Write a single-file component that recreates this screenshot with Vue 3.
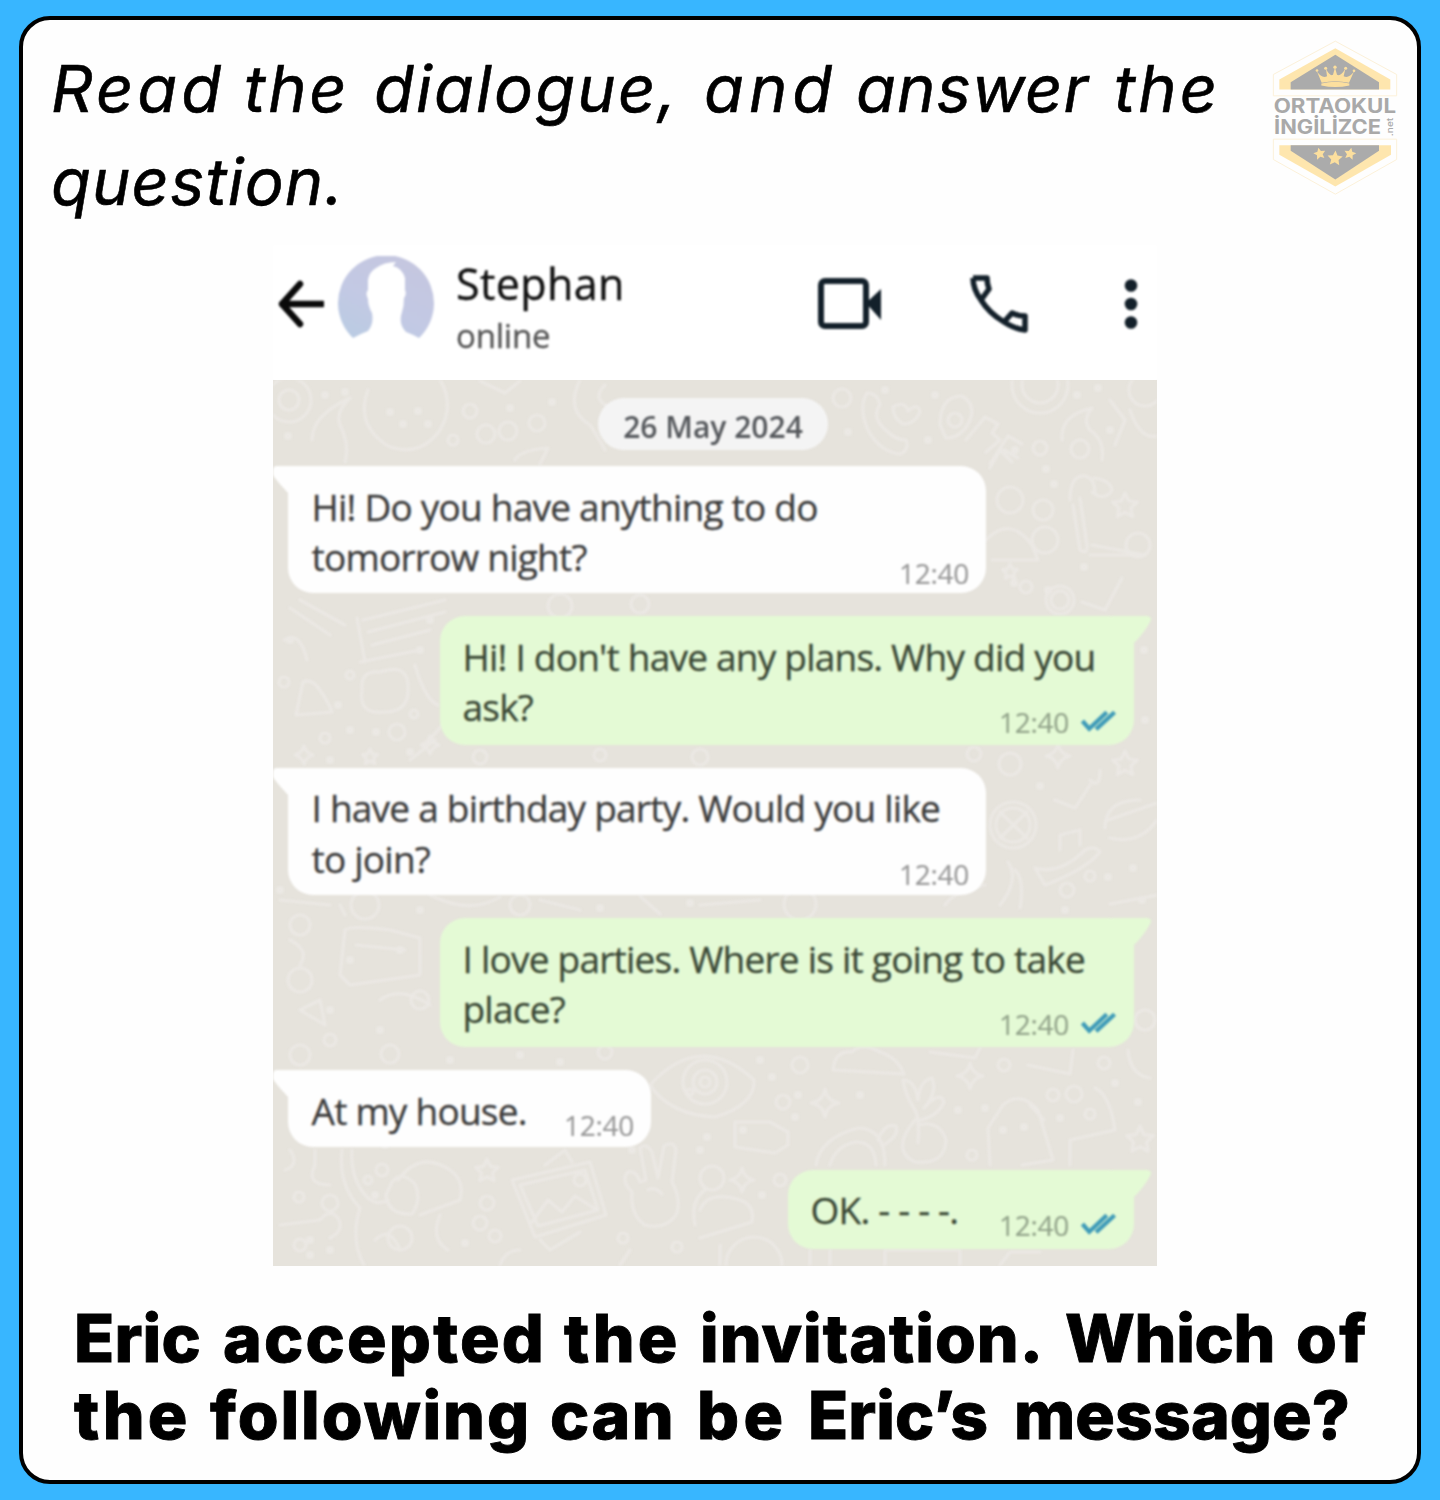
<script setup>
// w: distance to the start of the next word, ls: tracking
const intro = [
  [
    { t: 'Read', w: 193, ls: 4 },
    { t: 'the', w: 130, ls: 2.8 },
    { t: 'dialogue,', w: 330, ls: 2.2 },
    { t: 'and', w: 152, ls: 5 },
    { t: 'answer', w: 258, ls: 1.1 },
    { t: 'the', w: 110, ls: 3 },
  ],
  [{ t: 'question.', w: 310, ls: 1.1 }],
]

const question = [
  [
    { t: 'Eric', w: 149, ls: 0.2 },
    { t: 'accepted', w: 341, ls: 2.2 },
    { t: 'the', w: 136, ls: 3.2 },
    { t: 'invitation.', w: 365, ls: 1 },
    { t: 'Which', w: 231, ls: -0.3 },
    { t: 'of', w: 80, ls: 2.5 },
  ],
  [
    { t: 'the', w: 136, ls: 3.2 },
    { t: 'following', w: 340, ls: 1.9 },
    { t: 'can', w: 147, ls: 1.5 },
    { t: 'be', w: 111, ls: 4.5 },
    { t: 'Eric’s', w: 206, ls: 0 },
    { t: 'message?', w: 345, ls: 0.1 },
  ],
]

const messages = [
  { side: 'in', size: 'tall', lines: ['Hi! Do you have anything to do', 'tomorrow night?'] },
  { side: 'out', size: 'tall', lines: ["Hi! I don't have any plans. Why did you", 'ask?'] },
  { side: 'in', size: 'tall', lines: ['I have a birthday party. Would you like', 'to join?'] },
  { side: 'out', size: 'tall', lines: ['I love parties. Where is it going to take', 'place?'] },
  { side: 'in', size: 'short', lines: ['At my house.'] },
  { side: 'out', size: 'short', lines: ['OK. - - - -.'] },
]

const rings = [
  [470, 411, 7], [537, 423, 8], [486, 434, 9], [508, 431, 9], [453, 440, 5], [289, 400, 22], [289, 400, 10],
  [842, 398, 9], [955, 420, 7], [1040, 385, 28], [1040, 385, 18], [1040, 448, 7], [1080, 449, 9], [1145, 390, 16],
  [1010, 500, 13], [1043, 510, 10], [1045, 540, 13], [1138, 545, 12], [1060, 600, 14], [1060, 600, 9], [1026, 587, 6],
  [397, 732, 8], [325, 738, 5], [284, 682, 5], [350, 675, 4], [414, 714, 4], [560, 606, 12], [640, 604, 9],
  [974, 754, 7], [1010, 764, 11], [1013, 825, 23], [1013, 825, 17], [1067, 890, 7], [1090, 876, 5],
  [705, 1082, 22], [705, 1082, 12], [705, 1082, 5], [783, 1102, 7], [800, 1065, 8], [1004, 1065, 6], [1053, 1095, 6],
  [1074, 1094, 8], [1104, 1063, 6], [1090, 1114, 5], [972, 1155, 5], [712, 1178, 12], [754, 1265, 28],
  [780, 1180, 6], [299, 1197, 5], [330, 1203, 8], [487, 1203, 7], [480, 1223, 7], [495, 1236, 6], [382, 1170, 6],
  [368, 1180, 4], [623, 1238, 5], [677, 1247, 5], [690, 1092, 3], [400, 1238, 12], [300, 1245, 6], [580, 1180, 6],
  [300, 1055, 10], [390, 1054, 9], [605, 1052, 7], [365, 905, 14], [520, 905, 10], [800, 904, 16], [300, 925, 10],
  [330, 1040, 6], [420, 1000, 9], [300, 980, 12], [1145, 1020, 10], [700, 757, 8], [600, 755, 6], [480, 757, 7],
]

const dots = [
  [325, 395], [345, 392], [390, 412], [403, 424], [418, 411], [428, 424], [510, 408], [552, 402], [288, 436], [935, 395],
  [848, 432], [885, 390], [1077, 395], [1098, 388], [928, 440], [1110, 430], [1015, 450], [1054, 484], [1014, 583],
  [1048, 590], [1084, 567], [1046, 469], [350, 730], [376, 732], [338, 705], [1108, 877], [1133, 868], [1040, 786],
  [772, 1077], [760, 1060], [798, 1095], [860, 1095], [958, 1110], [985, 1108], [1060, 1118], [1115, 1083], [1138, 1102],
  [707, 1137], [743, 1130], [762, 1195], [795, 1117], [365, 1140], [385, 1145], [375, 1195], [632, 1150], [700, 1150],
  [1003, 1130], [1024, 1127], [465, 1243], [310, 1240], [310, 1255], [330, 1250], [290, 640], [420, 650], [430, 620],
  [410, 752], [330, 760], [320, 790], [1142, 900], [1065, 910], [280, 890], [420, 910], [600, 908], [690, 903],
  [350, 960], [400, 950], [330, 1010], [380, 1030], [520, 1055], [450, 1060], [560, 1062], [1144, 650], [1145, 720],
]

const stars = [[1125, 506, 13], [1125, 764, 13], [487, 1171, 12], [1140, 1140, 14], [370, 757, 8], [1010, 572, 8]]
const sparks = [[825, 1103, 14], [970, 1076, 13], [742, 1180, 12], [1058, 756, 12], [304, 755, 9], [430, 745, 9], [300, 835, 8]]

function star(x, y, r) {
  return Array.from({ length: 10 }, (_, i) => {
    const q = i % 2 ? r * 0.48 : r
    const a = (Math.PI / 5) * i - Math.PI / 2
    return `${(x + q * Math.cos(a)).toFixed(1)},${(y + q * Math.sin(a)).toFixed(1)}`
  }).join(' ')
}
const spark = (x, y, r) =>
  `M${x} ${y - r}Q${x + 2} ${y - 2} ${x + r} ${y}Q${x + 2} ${y + 2} ${x} ${y + r}Q${x - 2} ${y + 2} ${x - r} ${y}Q${x - 2} ${y - 2} ${x} ${y - r}Z`
</script>

<template>
  <main class="page">
    <section class="card">
      <header class="top">
        <h1 class="intro">
          <span v-for="(line, i) in intro" :key="i" class="line">
            <span v-for="(word, j) in line" :key="j" class="word" :style="{ width: word.w + 'px', letterSpacing: word.ls + 'px' }">{{ word.t }}</span>
          </span>
        </h1>
        <svg class="logo" viewBox="66 60 378 464" aria-label="Ortaokul İngilizce .net">
          <g fill="none" stroke="#fcf1d9" stroke-width="3">
            <path d="M70 227V163L256 63L440 163V227Z" />
            <path d="M70 357V418L256 522L440 418V357Z" />
          </g>
          <g fill="#fee6ae">
            <path d="M88 208V178L256 84L421 178V208Z" />
            <path d="M88 375V404L256 499L423 404V375Z" />
          </g>
          <g fill="#ababab">
            <path d="M122 208V186L256 104L387 186V208Z" />
            <path d="M122 375V392L256 478L387 392V375Z" />
          </g>
          <g fill="#fcdf9e">
            <path d="M215 188L201 154Q216 176 231 168L228 146Q240 170 249 164L255 142L261 164Q272 170 286 146L281 168Q296 176 312 154L297 188Q256 178 215 188Z" />
            <path d="M214 190Q256 180 298 190V196Q256 205 214 196Z" />
            <circle cx="201" cy="151" r="4" /><circle cx="227" cy="144" r="4.5" /><circle cx="255" cy="141" r="5" />
            <circle cx="287" cy="144" r="4.5" /><circle cx="312" cy="152" r="4" />
            <polygon transform="rotate(-12 209 401)" :points="star(209, 401, 19)" />
            <polygon transform="rotate(4 255 415)" :points="star(255, 415, 24)" />
            <polygon transform="rotate(12 300 401)" :points="star(300, 401, 19)" />
          </g>
          <g class="logo-text">
            <text x="71" y="278" textLength="367" lengthAdjust="spacingAndGlyphs">ORTAOKUL</text>
            <text x="72" y="341" textLength="321" lengthAdjust="spacingAndGlyphs">İNGİLİZCE</text>
            <text class="logo-net" transform="translate(428 348) rotate(-90)" textLength="55" lengthAdjust="spacingAndGlyphs">.net</text>
          </g>
        </svg>
      </header>

      <article class="phone">
        <header class="bar">
          <svg class="back" viewBox="0 0 46 48"><path d="M22 4L4 24L22 44M4 24H45" /></svg>
          <svg class="avatar" viewBox="0 0 96 96">
            <defs>
              <linearGradient id="sky" x1="0" y1="1" x2="0.6" y2="0">
                <stop offset="0" stop-color="#b9cce3" /><stop offset="0.5" stop-color="#c3c9e4" /><stop offset="1" stop-color="#c5c7e0" />
              </linearGradient>
            </defs>
            <path fill="url(#sky)" d="M15 82A48 48 0 1 1 81 82Q76 79 68 76Q60 68 64 56Q66 50 66 42Q69 38 67 34V22Q64 12 55 10L58 6Q46 6 38 12Q31 16 30 24V34Q27 37 30 43Q30 50 34 57Q36 68 30 75Q22 78 15 82Z" />
          </svg>
          <div class="who">
            <span class="name">Stephan</span>
            <span class="status">online</span>
          </div>
          <svg class="video" viewBox="0 0 64 52">
            <rect x="3" y="3" width="45" height="45" rx="4" /><path class="solid" d="M48 25L63 11V42Z" />
          </svg>
          <svg class="call" viewBox="0 0 60 60">
            <path d="M4 4H18Q18 10 20 15L12 26M4 4Q4 15 12 26Q20 39 35 48M35 48L43 39Q49 42 56 42V56Q46 55 35 48" />
          </svg>
          <svg class="more" viewBox="0 0 14 50"><circle cx="7" cy="6.5" r="6.3" /><circle cx="7" cy="25" r="6.3" /><circle cx="7" cy="43.5" r="6.3" /></svg>
        </header>

        <div class="chat">
          <svg class="doodles" viewBox="273 380 884 886">
            <circle v-for="([x, y, r], i) in rings" :key="'r' + i" :cx="x" :cy="y" :r="r" />
            <circle v-for="([x, y], i) in dots" :key="'d' + i" class="dot" :cx="x" :cy="y" r="4" />
            <polygon v-for="([x, y, r], i) in stars" :key="'s' + i" :points="star(x, y, r)" />
            <path v-for="([x, y, r], i) in sparks" :key="'p' + i" :d="spark(x, y, r)" />
            <path d="M368 390Q355 425 388 446Q420 458 440 430Q455 405 440 380M312 440Q312 415 350 398Q335 412 340 425Q350 445 345 462M580 380Q565 410 590 425Q600 440 605 450M605 385Q590 400 612 408M480 381L505 393L520 381M515 460Q520 450 548 448L540 464" />
            <path d="M867 393Q878 393 880 405Q870 418 888 432Q896 440 906 440Q910 450 900 454Q880 452 868 430Q858 408 867 393ZM893 407Q905 400 908 411Q918 402 920 412Q915 424 903 424Q893 418 893 407ZM940 425Q940 396 962 396Q976 404 970 420Q962 438 946 438ZM966 440L985 417L998 424L992 433L1000 440L986 452M990 464L1008 436L1022 444M1004 450L1018 458M1062 440Q1060 415 1092 408Q1082 420 1090 430Q1105 440 1102 460M1110 400L1125 420L1115 445M1130 410Q1140 440 1157 436" />
            <path d="M986 540Q1010 515 1032 545L1038 560H992M1070 500Q1070 474 1086 476Q1095 480 1095 492M1073 505L1080 550Q1088 555 1087 545L1080 498M1094 478Q1110 480 1112 490Q1105 502 1092 492M1090 555H1145L1092 545M1082 602L1105 610L1122 578M990 468L1000 450L1012 462" />
            <path d="M363 620L445 600M368 632L445 612M372 645L430 630M357 618L365 662M360 662L420 650M362 690Q360 670 380 672Q410 662 408 690Q408 712 385 712Q358 715 362 690ZM296 715L303 682Q312 678 320 690Q330 705 332 712ZM290 608L330 635M300 600L345 625M284 640Q300 630 307 660M415 665Q425 700 438 705M425 745L445 722M410 760L435 740" />
            <path d="M345 930Q350 925 390 930L420 938V975L350 985L340 975ZM356 945L405 950M290 940Q310 950 300 965M380 1000Q400 985 430 1005M300 1010L320 1000L325 1025ZM280 900L330 905M340 905L345 915M430 895Q470 915 500 897M540 900L580 910M700 905L760 900M640 896L660 914" />
            <path d="M1000 812L1027 838M1000 838L1027 812M1060 835L1080 830V845M1060 850V835M1035 868Q1060 875 1085 850Q1095 845 1100 852Q1085 870 1045 885ZM1105 828Q1105 800 1140 800M1110 838Q1140 845 1157 820M1108 820L1157 803M1090 780Q1100 790 1100 770M1055 800L1075 808L1090 785M1000 905Q1020 880 1008 862M1020 908Q1025 880 1015 870M1110 904L1157 895M945 905Q955 890 985 885" />
            <path d="M650 1085Q700 1030 754 1080Q755 1105 715 1117Q670 1115 650 1085ZM833 1070Q835 1050 852 1052Q862 1042 880 1052Q898 1058 904 1074ZM930 1052L975 1058L980 1048M1028 1065L1070 1074L1073 1050M1128 1050Q1130 1075 1150 1078M915 1120Q890 1150 915 1162Q945 1165 946 1140Q940 1120 918 1125M918 1143Q920 1120 915 1110Q905 1095 903 1080Q915 1080 918 1100Q920 1080 932 1078Q938 1092 924 1108Q940 1090 944 1102Q938 1116 920 1120" />
            <path d="M735 1122V1147L775 1153L788 1145V1132L770 1122ZM816 1165Q820 1138 858 1128Q885 1128 885 1165M830 1165Q836 1145 856 1142Q875 1142 876 1165M878 1140Q885 1122 896 1126Q900 1135 884 1145M990 1165L988 1128L1003 1105Q1020 1090 1038 1110L1053 1160L1022 1165M1030 1105L1044 1120M1070 1165V1140L1115 1130Q1110 1095 1095 1088M700 1210Q708 1190 740 1200Q755 1205 752 1222L700 1238M720 1265V1245M810 1265V1250M830 1265V1250M885 1265V1250H960V1265M1000 1265L1010 1252H1040" />
            <path d="M512 1180L590 1162L606 1215L535 1237ZM520 1185L585 1170L598 1210L538 1226ZM532 1222L548 1200L562 1212L575 1196L597 1210M545 1165L565 1150L572 1162M540 1240L550 1250L580 1232M632 1192Q620 1180 628 1172Q636 1170 640 1182L646 1180L640 1148Q646 1142 652 1152L658 1178L664 1146Q674 1140 676 1150L672 1182Q682 1200 676 1215Q665 1230 645 1225Q630 1215 632 1192ZM648 1190Q655 1186 662 1194" />
            <path d="M392 1182Q402 1170 415 1184Q422 1200 412 1214Q388 1215 386 1195ZM398 1180Q420 1150 450 1170Q465 1180 460 1200L420 1215M342 1150Q338 1185 360 1208Q350 1240 364 1265M352 1150Q350 1180 368 1198Q378 1206 388 1200M440 1215Q430 1240 448 1250M375 1240Q390 1225 400 1250M280 1225L320 1220Q330 1208 338 1218Q345 1230 330 1238M285 1170Q300 1165 290 1150M330 1185Q305 1185 315 1165V1150M500 1265Q505 1250 520 1250M705 1190Q690 1200 695 1225M620 1265L630 1250" />
          </svg>

          <time class="day">26 May 2024</time>
          <ol class="thread">
            <li v-for="(m, i) in messages" :key="i" class="msg" :class="[m.side, m.size]">
              <svg v-if="m.side === 'in'" class="tail" viewBox="0 0 40 30"><path d="M40 0H4Q0 0 0 4V9Q2 13 16 28V30H40Z" /></svg>
              <svg v-else class="tail" viewBox="0 0 40 30"><path d="M0 0H35Q41 1 38 6Q32 17 22 27V30H0Z" /></svg>
              <p class="text"><span v-for="line in m.lines" :key="line">{{ line }}</span></p>
              <span class="meta">
                12:40
                <svg v-if="m.side === 'out'" class="ticks" viewBox="0 0 38 24"><path d="M2.5 12L9.5 20L27.5 3M16.5 20.5L35.5 3" /></svg>
              </span>
            </li>
          </ol>
        </div>
      </article>

      <h2 class="question">
        <span v-for="(line, i) in question" :key="i" class="line">
          <span v-for="(word, j) in line" :key="j" class="word" :style="{ width: word.w + 'px', letterSpacing: word.ls + 'px' }">{{ word.t }}</span>
        </span>
      </h2>
    </section>
  </main>
</template>

<style>
body { margin: 0; background: #38b6ff; }
</style>

<style scoped>
* { box-sizing: border-box; }
.page {
  height: 1500px;
  padding: 16px 19px;
  background: #38b6ff;
  overflow: hidden;
}
.card {
  height: 1468px;
  border: 4px solid #000;
  border-radius: 31px;
  background: #fefefe;
  display: flex;
  flex-direction: column;
  overflow: hidden;
}
.top {
  display: flex;
  justify-content: space-between;
  height: 225px;
  padding: 20px 19px 0 28px;
}
h1, h2, p, ol { margin: 0; padding: 0; }
.line { display: flex; }
.word { flex: none; white-space: nowrap; }
.intro {
  padding-top: 2px;
  font: italic 400 65px/93px Inter, "Open Sans", sans-serif;
  font-feature-settings: "cv11";
  color: #000;
  -webkit-text-stroke: 0.6px #000;
}
.logo { width: 126px; height: 155px; flex: none; }
.logo-text { font: 700 59px Inter, sans-serif; fill: #a9a9a9; }
.logo-net { font-size: 27px; font-weight: 500; }

.phone {
  width: 884px;
  margin-left: 250px;
  flex: none;
}
.bar {
  height: 135px;
  display: flex;
  align-items: flex-start;
  background: #fff;
  filter: blur(0.8px);
}
.bar svg { flex: none; }
.back { width: 46px; height: 48px; margin: 35px 0 0 5px; fill: none; stroke: #0a0a0a; stroke-width: 6.4; stroke-linejoin: round; stroke-linecap: round; }
.avatar { width: 96px; height: 96px; margin: 11px 0 0 14px; }
.who {
  width: 200px;
  margin: 11px 0 0 22px;
  display: flex;
  flex-direction: column;
  font-family: "Open Sans", "Noto Sans", sans-serif;
  white-space: nowrap;
}
.name { font-size: 43px; line-height: 56px; font-weight: 500; color: #111; letter-spacing: 0.4px; -webkit-text-stroke: 0.4px #111; }
.status { font-size: 33px; line-height: 47px; color: #555; letter-spacing: -0.2px; -webkit-text-stroke: 0.3px #555; }
.video { width: 64px; height: 52px; margin: 33px 0 0 162px; fill: none; stroke: #13202a; stroke-width: 6; }
.video .solid { fill: #13202a; stroke: none; }
.call { width: 60px; height: 60px; margin: 29px 0 0 87px; fill: none; stroke: #13202a; stroke-width: 5.5; stroke-linejoin: round; }
.more { width: 14px; height: 50px; margin: 34px 0 0 95px; fill: #13202a; }

.chat {
  position: relative;
  height: 886px;
  background: #e6e3dc;
  overflow: hidden;
}
.doodles {
  position: absolute;
  inset: 0;
  width: 884px;
  height: 886px;
  fill: none;
  stroke: #ebe8e4;
  stroke-width: 3.2;
  stroke-linecap: round;
  stroke-linejoin: round;
  filter: blur(1px);
}
.doodles .dot { fill: #ebe8e4; stroke: none; }
.day {
  position: relative;
  display: block;
  width: 230px;
  height: 52px;
  margin: 18px 0 16px 325px;
  border-radius: 26px;
  background: #f4f4f4;
  font: 600 30px/58px "Open Sans", "Noto Sans", sans-serif;
  color: #55585c;
  text-align: center;
  filter: blur(0.8px);
}
.thread {
  list-style: none;
  display: flex;
  flex-direction: column;
  gap: 23.2px;
}
.msg {
  position: relative;
  display: flex;
  justify-content: space-between;
  border-radius: 25px;
  font-family: "Open Sans", "Noto Sans", sans-serif;
  filter: blur(0.8px);
}
.in { width: 698px; height: 127px; margin-left: 15px; padding: 15.5px 17px 0 23.5px; background: #fefefe; color: #3c3c3c; }
.out { width: 694px; height: 128.5px; margin-left: 167px; padding: 15.5px 17px 0 22.5px; background: #e4fad5; color: #3a4835; }
.in.short { width: 363px; height: 77px; padding-top: 16.5px; }
.out.short { width: 346px; height: 79px; margin-left: 515px; padding-top: 15.5px; }
.tail { position: absolute; top: 0; width: 40px; height: 30px; }
.in .tail { left: -15px; fill: #fefefe; }
.out .tail { right: -18px; fill: #e4fad5; }
.text {
  position: relative;
  width: 0;
  font-size: 37px;
  line-height: 50.4px;
  letter-spacing: -0.77px;
  white-space: nowrap;
  -webkit-text-stroke: 0.3px currentColor;
}
.text span { display: block; }
.meta {
  position: relative;
  align-self: flex-end;
  display: flex;
  gap: 11px;
  font-size: 28px;
  line-height: 28px;
  letter-spacing: -0.3px;
  color: #999;
  margin-bottom: 6.5px;
  -webkit-text-stroke: 0.2px currentColor;
}
.out .meta { color: #93a48b; margin-bottom: 8.5px; }
.short .meta { margin-bottom: 8px; }
.out.short .meta { margin-bottom: 10px; }
.ticks { width: 37px; height: 24px; margin-top: 1px; fill: none; stroke: #3f9bb8; stroke-width: 4.4; }

.question {
  margin-top: 34px;
  padding-left: 51px;
  font: 800 66px/77px Inter, "Open Sans", sans-serif;
  color: #000;
  -webkit-text-stroke: 0.9px #000;
}
</style>
